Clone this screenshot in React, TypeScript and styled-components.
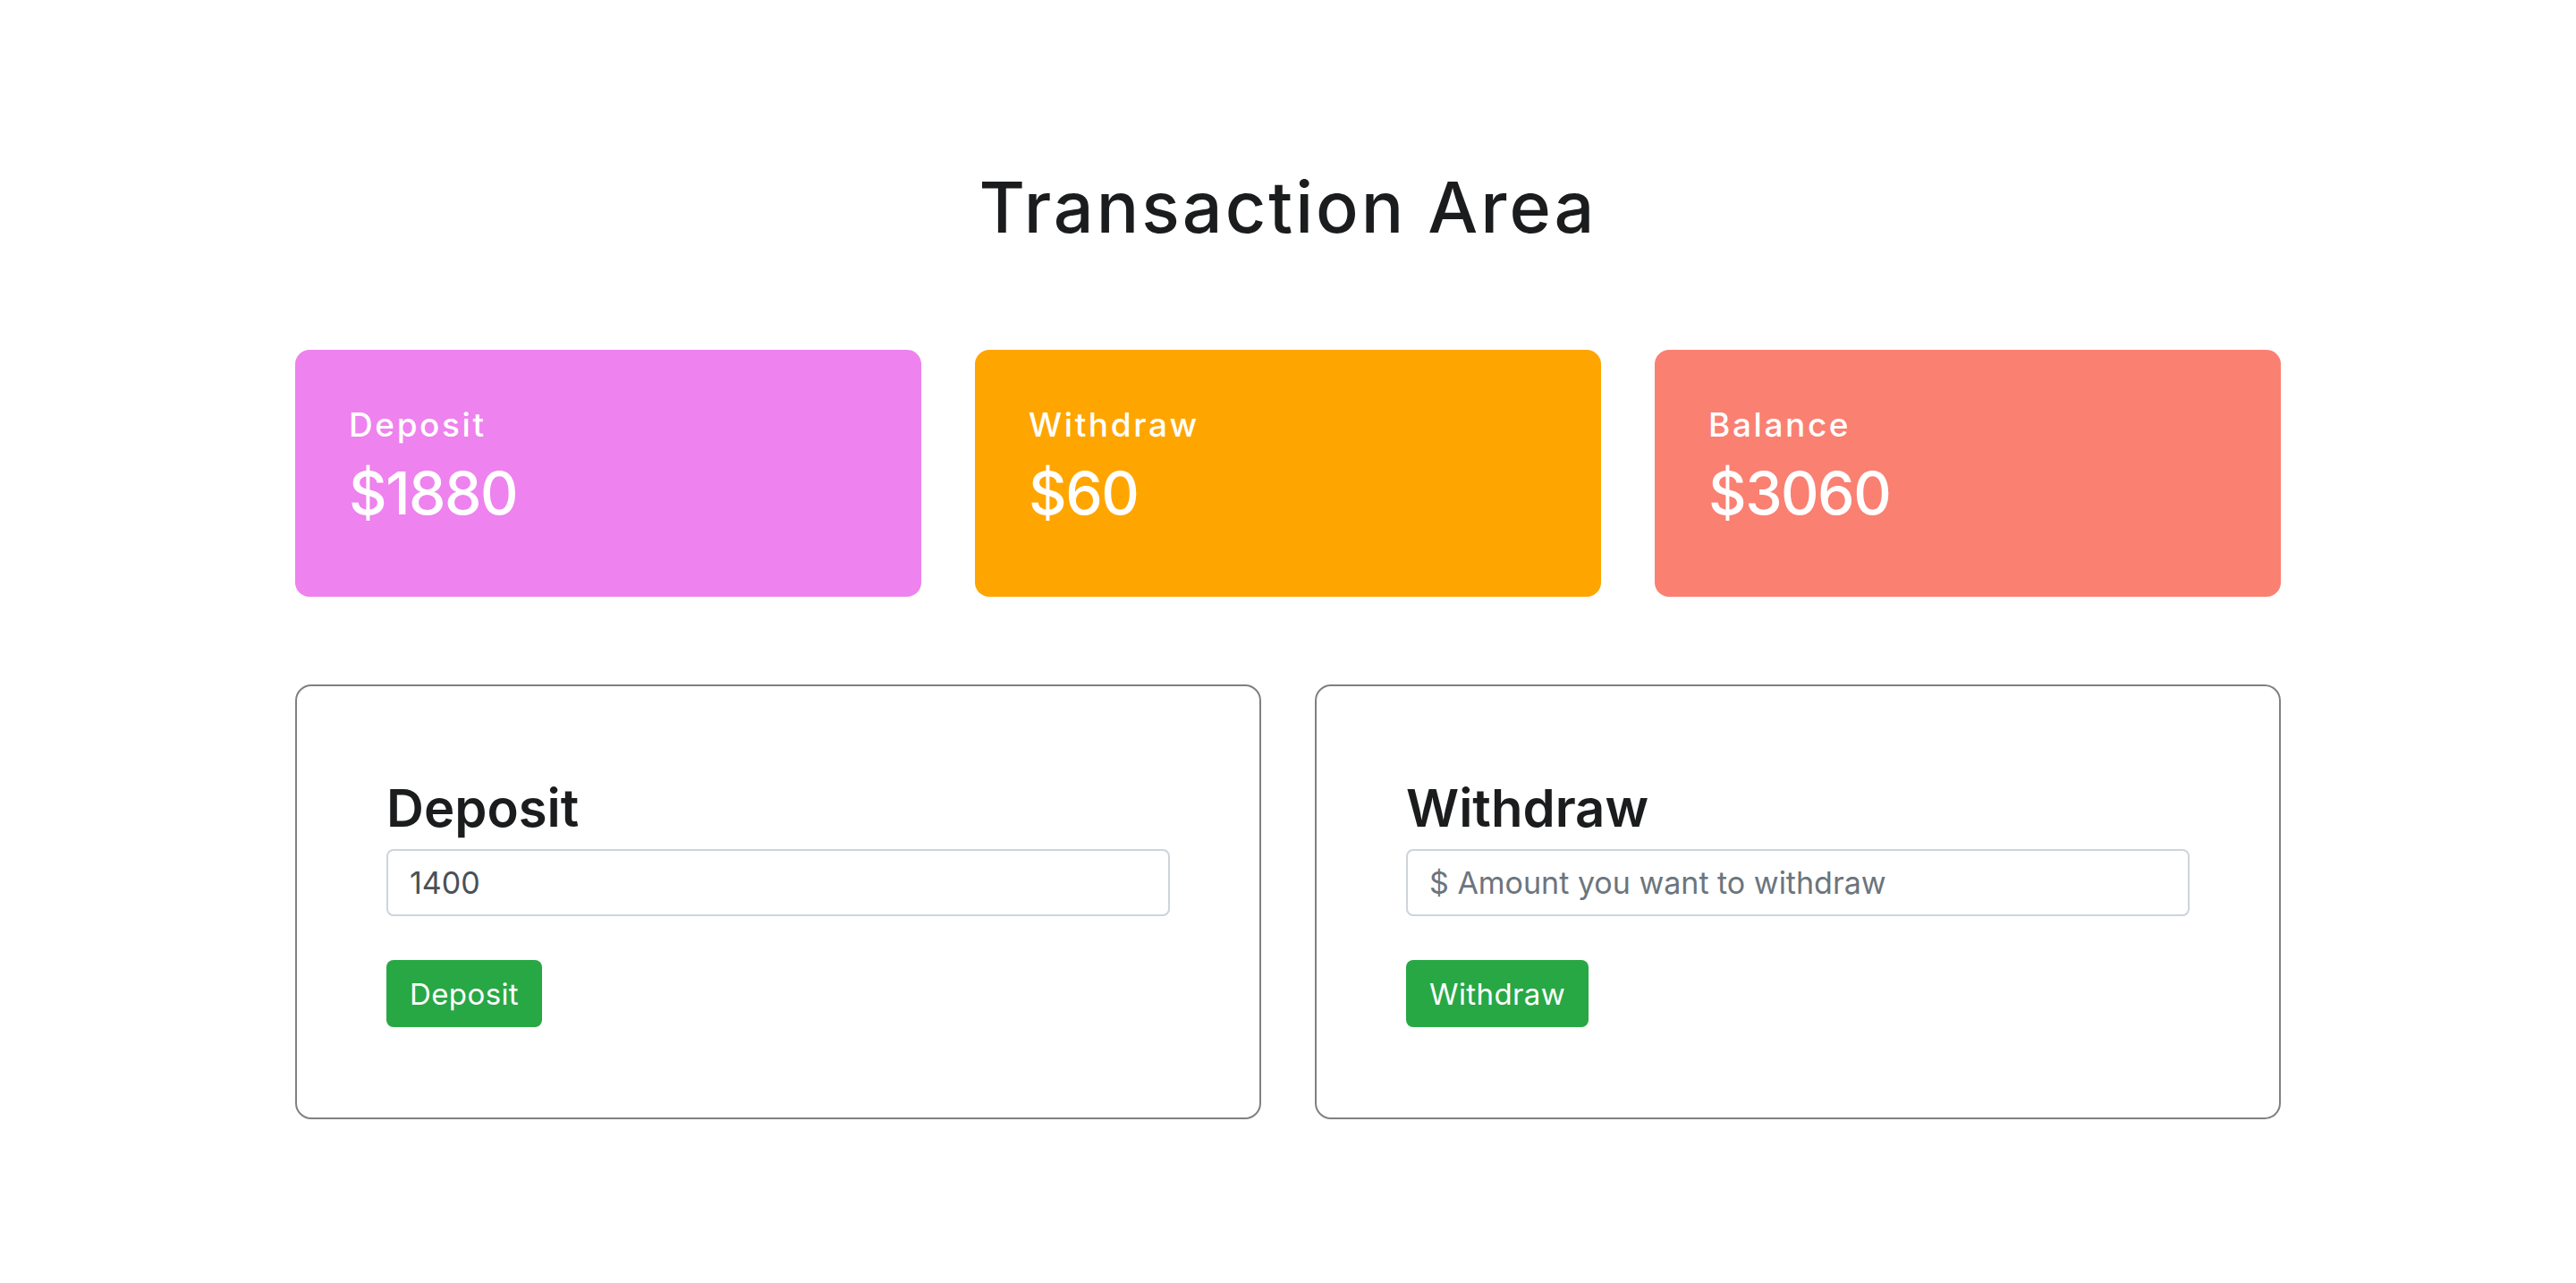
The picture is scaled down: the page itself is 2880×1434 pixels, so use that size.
import React from "react";
import styled, { createGlobalStyle } from "styled-components";

const Global = createGlobalStyle`
  html, body {
    margin: 0;
    padding: 0;
    background: #ffffff;
  }
  body {
    font-family: Inter, "Noto Sans", sans-serif;
    color: #212529;
  }
  * { box-sizing: border-box; }
`;

const Page = styled.main`
  width: 2220px;
  margin: 0 auto;
  padding-top: 192px;
  padding-bottom: 180px;
  display: flex;
  flex-direction: column;
`;

const Title = styled.h1`
  margin: 0;
  font-size: 79px;
  line-height: 1;
  font-weight: 500;
  letter-spacing: 3px;
  text-align: center;
  color: #1b1c1d;
`;

const SummaryRow = styled.section`
  margin-top: 120px;
  display: grid;
  grid-template-columns: repeat(3, 1fr);
  gap: 60px;
`;

const SummaryCard = styled.div<{ $bg: string }>`
  height: 276px;
  border-radius: 16px;
  background: ${(p) => p.$bg};
  color: #ffffff;
  padding: 65px 60px 0;
  display: flex;
  flex-direction: column;
`;

const SummaryLabel = styled.h4`
  margin: 0;
  font-size: 37px;
  line-height: 1;
  font-weight: 500;
  letter-spacing: 2.6px;
`;

const SummaryAmount = styled.h2`
  margin: 25px 0 0;
  font-size: 66px;
  line-height: 1;
  font-weight: 500;
  letter-spacing: -1.5px;
`;

const FormRow = styled.section`
  margin-top: 98px;
  display: grid;
  grid-template-columns: repeat(2, 1fr);
  gap: 60px;
`;

const Panel = styled.div`
  border: 2px solid #808080;
  border-radius: 18px;
  padding: 107px 100px 101px;
  display: flex;
  flex-direction: column;
  align-items: flex-start;
`;

const PanelTitle = styled.h3`
  margin: 0 0 17px;
  font-size: 58px;
  line-height: 1;
  font-weight: 600;
  color: #1b1c1d;
`;

const AmountInput = styled.input`
  width: 100%;
  height: 75px;
  border: 2px solid #ced4da;
  border-radius: 8px;
  padding: 0 24px;
  font-family: Inter, "Noto Sans", sans-serif;
  font-size: 34px;
  letter-spacing: 0;
  color: #495057;
  background: #fff;
  outline: none;
  &::placeholder {
    color: #6c757d;
    opacity: 1;
  }
`;

const ActionButton = styled.button`
  margin-top: 49px;
  height: 75px;
  padding: 0 26px;
  border: none;
  border-radius: 8px;
  background: #28a745;
  color: #ffffff;
  font-family: Inter, "Noto Sans", sans-serif;
  font-size: 33px;
  font-weight: 400;
  letter-spacing: 0.4px;
  cursor: pointer;
`;

const summaries = [
  { label: "Deposit", amount: "$1880", bg: "#ee82ee" },
  { label: "Withdraw", amount: "$60", bg: "#ffa500" },
  { label: "Balance", amount: "$3060", bg: "#fa8072" },
];

export default function App() {
  return (
    <>
      <Global />
      <Page>
        <Title>Transaction Area</Title>
        <SummaryRow>
          {summaries.map((s) => (
            <SummaryCard key={s.label} $bg={s.bg}>
              <SummaryLabel>{s.label}</SummaryLabel>
              <SummaryAmount>{s.amount}</SummaryAmount>
            </SummaryCard>
          ))}
        </SummaryRow>
        <FormRow>
          <Panel>
            <PanelTitle>Deposit</PanelTitle>
            <AmountInput type="text" defaultValue="1400" placeholder="$ Amount you want to deposit" />
            <ActionButton>Deposit</ActionButton>
          </Panel>
          <Panel>
            <PanelTitle>Withdraw</PanelTitle>
            <AmountInput type="text" placeholder="$ Amount you want to withdraw" />
            <ActionButton>Withdraw</ActionButton>
          </Panel>
        </FormRow>
      </Page>
    </>
  );
}
